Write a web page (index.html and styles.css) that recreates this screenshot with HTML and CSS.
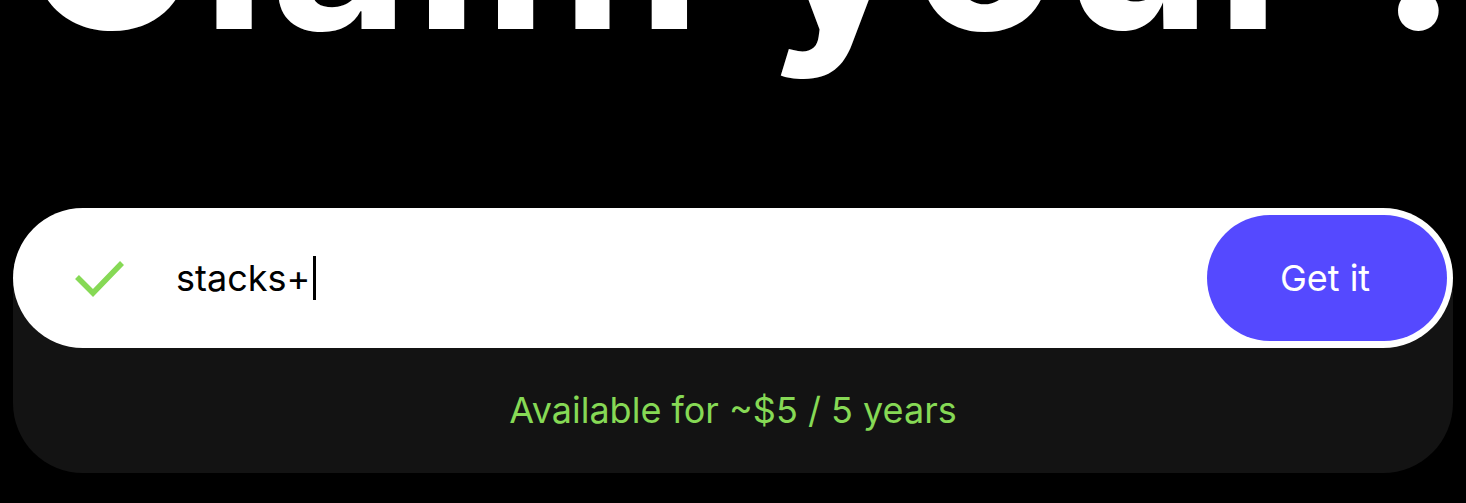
FILE: index.html
```html
<!DOCTYPE html>
<html lang="en">
<head>
<meta charset="utf-8">
<title>Claim your domain</title>
<link rel="stylesheet" href="styles.css">
</head>
<body>
<div class="hero">
  <h1 class="headline">Claim your .</h1>
</div>
<div class="card">
  <div class="pill">
    <svg class="check" width="56" height="56" viewBox="0 0 56 56" aria-hidden="true">
      <polyline points="5,27 21,43 50,13" fill="none" stroke="#86d955" stroke-width="5.5" stroke-linecap="butt" stroke-linejoin="miter"/>
    </svg>
    <div class="field"><span class="value">stacks+</span><span class="caret"></span></div>
    <button class="cta">Get it</button>
  </div>
  <div class="note">Available for ~$5 / 5 years</div>
</div>
</body>
</html>
```

FILE: styles.css
```css
html, body {
  margin: 0;
  padding: 0;
  background: #000;
}
body {
  font-family: Inter, "Noto Sans", "Liberation Sans", sans-serif;
  width: 1466px;
  height: 503px;
  overflow: hidden;
}
.hero {
  height: 208px;
  overflow: hidden;
}
.headline {
  margin: -178px 0 0 0;
  padding-left: 20px;
  font-size: 240px;
  line-height: 240px;
  font-weight: 700;
  color: #fff;
  white-space: nowrap;
  letter-spacing: 4px;
}
.card {
  margin: 0 13px;
  width: 1440px;
  height: 265px;
  background: #131313;
  border-radius: 70px;
  display: flex;
  flex-direction: column;
}
.pill {
  box-sizing: border-box;
  height: 140px;
  background: #fff;
  border-radius: 70px;
  padding: 7px 6px 7px 7px;
  display: flex;
  align-items: center;
}
.check {
  margin-left: 52px;
  flex: none;
}
.field {
  margin-left: 48px;
  display: flex;
  align-items: center;
  font-size: 36px;
  color: #000;
}
.value {
  line-height: 44px;
}
.caret {
  display: inline-block;
  width: 3px;
  height: 44px;
  background: #000;
  margin-left: 3px;
}
.cta {
  margin-left: auto;
  width: 240px;
  height: 126px;
  border: none;
  border-radius: 63px;
  background: #5549ff;
  color: #fff;
  font-family: Inter, "Noto Sans", "Liberation Sans", sans-serif;
  font-size: 36px;
  font-weight: 400;
  padding: 0 4px 0 0;
}
.note {
  flex: 1;
  display: flex;
  align-items: center;
  justify-content: center;
  color: #86d955;
  font-size: 36px;
  padding-bottom: 2px;
}
```
